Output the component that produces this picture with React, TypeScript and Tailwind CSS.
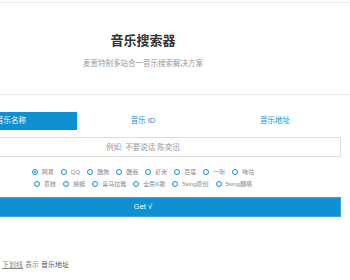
import React from 'react';

const font = { fontFamily: '"Liberation Sans", "Noto Sans CJK SC", sans-serif' };

const row1 = ['网易', 'QQ', '酷狗', '酷我', '虾米', '百度', '一听', '咪咕'];
const row2 = ['荔枝', '蜻蜓', '喜马拉雅', '全民K歌', '5sing原创', '5sing翻唱'];

function Radio({ label, checked }: { label: string; checked?: boolean }) {
  return (
    <label className="flex items-center gap-[4px]">
      <span className="flex h-[6px] w-[6px] items-center justify-center rounded-full border-[1.5px] border-[#0e90d2] bg-white">
        {checked && <span className="h-[2px] w-[2px] rounded-full bg-[#0e90d2]" />}
      </span>
      <span className="text-[6px] leading-[12px] text-[#888]">{label}</span>
    </label>
  );
}

export default function App() {
  const [tab, setTab] = React.useState(0);
  const tabs = ['音乐名称', '音乐 ID', '音乐地址'];

  return (
    <div className="min-h-[280px] overflow-hidden bg-white pt-[2px]" style={font}>
      {/* header */}
      <div className="h-[93px] border-y border-[#e8e8e8] pt-[30px]">
        <div className="ml-[-55px] w-[396px] text-center">
          <h1 className="text-[13px] font-bold leading-[16px] text-[#333]">音乐搜索器</h1>
          <p className="mt-[10px] text-[7.5px] leading-[10px] text-[#999]">麦葱特制多站合一音乐搜索解决方案</p>
        </div>
      </div>

      <div className="ml-[-55px] w-[396px]">
        {/* tabs */}
        <div className="mt-[17px] grid h-[18px] grid-cols-3">
          {tabs.map((t, i) => (
            <button
              key={t}
              onClick={() => setTab(i)}
              className={
                i === tab
                  ? 'flex items-center justify-center bg-[#0e90d2] text-[7.5px] text-white'
                  : 'flex items-center justify-center text-[7.5px] text-[#0e90d2]'
              }
            >
              {t}
            </button>
          ))}
        </div>

        {/* input */}
        <input
          className="mt-[7px] block h-[20px] w-full border border-[#ddd] text-center text-[7.5px] outline-none placeholder:text-[#999]"
          placeholder="例如: 不要说话 陈奕迅"
        />

        {/* sources */}
        <div className="mt-[9px] flex flex-col items-center">
          <div className="flex gap-x-[7px]">
            {row1.map((r, i) => (
              <Radio key={r} label={r} checked={i === 0} />
            ))}
          </div>
          <div className="flex gap-x-[7px]">
            {row2.map((r) => (
              <Radio key={r} label={r} />
            ))}
          </div>
        </div>

        <button className="mt-[7px] block h-[20px] w-full border border-[#3aa3dc] bg-[#0e90d2] text-[7.5px] text-white">
          Get √
        </button>
      </div>

      <p className="mt-[43px] pl-[2px] text-[7px] leading-[10px] text-[#888]">
        <span className="underline">下划线</span> 表示 <span className="text-[#555]">音乐地址</span>
      </p>
    </div>
  );
}
